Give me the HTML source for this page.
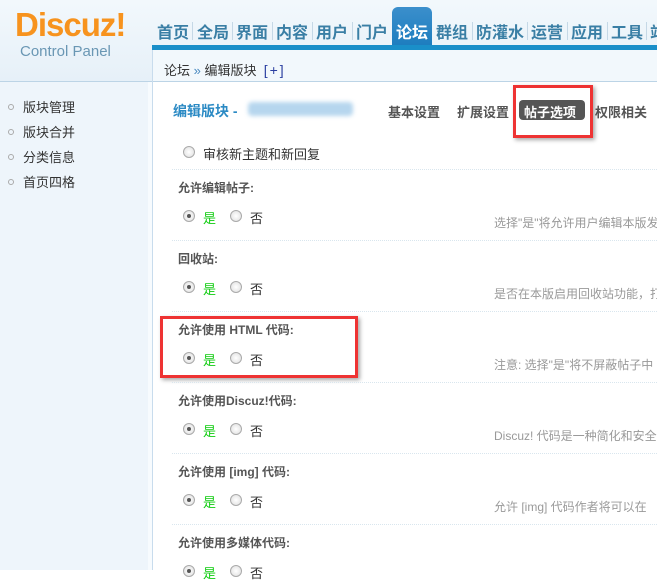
<!DOCTYPE html>
<html><head><meta charset="utf-8"><style>
*{margin:0;padding:0;box-sizing:border-box}
body{width:657px;height:570px;overflow:hidden;background:#fff;font-family:"Liberation Sans","Noto Sans CJK SC",sans-serif;font-size:12px;color:#333;position:relative}
.a{position:absolute;white-space:nowrap}
.hdr{left:0;top:0;width:657px;height:82px;background:linear-gradient(#f2f8fc,#e6f0f8)}
.side{left:0;top:82px;width:148px;height:488px;background:#eef5fb}
.nav{top:19px;font-size:16px;color:#3a7fa5;font-weight:bold;letter-spacing:0}
.sep{top:22px;width:1px;height:18px;background:#c5d8e6}
.cur{left:392px;top:7px;width:40px;height:43px;background:linear-gradient(#3b8fcc,#1a7bbd);border-radius:6px 6px 0 0}
.rad{width:12px;height:12px;border-radius:50%;border:1px solid #aaa;background:radial-gradient(#fff,#ddd)}
.on::after{content:"";position:absolute;left:3px;top:3px;width:4px;height:4px;border-radius:50%;background:#555}
.t{font-weight:bold;color:#555;font-size:12px}
.line{left:172px;height:1px;width:485px;background:linear-gradient(90deg,#d5e6f2 0,#d5e6f2 67%,transparent 67%);border-top:1px dotted #d9e6ee;height:0}
.d{color:#999;font-size:12px;left:494px}
.g{color:#1c1}
.box{border:3px solid #e33;box-shadow:2px 2px 4px rgba(0,0,0,.35)}
</style></head><body>
<div class="a hdr"></div>
<div class="a" style="left:15px;top:6px;font-size:33px;font-weight:bold;color:#f7931e;letter-spacing:-1px">Discuz!</div>
<div class="a" style="left:20px;top:43px;font-size:15px;color:#6a97b4">Control Panel</div>
<div class="a cur"></div>
<div class="a nav" style="left:157px">首页</div><div class="a sep" style="left:192px"></div>
<div class="a nav" style="left:197px">全局</div><div class="a sep" style="left:232px"></div>
<div class="a nav" style="left:236px">界面</div><div class="a sep" style="left:272px"></div>
<div class="a nav" style="left:276px">内容</div><div class="a sep" style="left:312px"></div>
<div class="a nav" style="left:316px">用户</div><div class="a sep" style="left:352px"></div>
<div class="a nav" style="left:356px">门户</div>
<div class="a nav" style="left:396px;color:#fff">论坛</div>
<div class="a nav" style="left:436px">群组</div><div class="a sep" style="left:472px"></div>
<div class="a nav" style="left:476px">防灌水</div><div class="a sep" style="left:527px"></div>
<div class="a nav" style="left:531px">运营</div><div class="a sep" style="left:567px"></div>
<div class="a nav" style="left:571px">应用</div><div class="a sep" style="left:607px"></div>
<div class="a nav" style="left:611px">工具</div><div class="a sep" style="left:646px"></div>
<div class="a nav" style="left:650px">站</div>
<div class="a" style="left:152px;top:45px;width:505px;height:5px;background:#1a8fc9"></div>
<div class="a" style="left:152px;top:50px;width:505px;height:32px;background:#f2f8fc"></div>
<div class="a" style="left:0;top:81px;width:657px;height:1px;background:#bcd4e6"></div>
<div class="a" style="left:152px;top:50px;width:1px;height:520px;background:#c8dced"></div>
<div class="a" style="left:164px;top:60px;font-size:13px;color:#333">论坛 <span style="color:#4a8ac0">»</span> 编辑版块 &nbsp;<span style="color:#2a3ea0;font-size:14px;letter-spacing:2px">[+]</span></div>
<div class="a side"></div>
<div class="a" style="left:148px;top:82px;width:4px;height:488px;background:#f7fbfe"></div>
<div class="a" style="left:8px;top:95px;line-height:25px;font-size:13px;color:#333">
<div><span style="display:inline-block;width:6px;height:6px;border:1px solid #aaa;border-radius:50%;margin-right:9px;vertical-align:2px"></span>版块管理</div>
<div><span style="display:inline-block;width:6px;height:6px;border:1px solid #aaa;border-radius:50%;margin-right:9px;vertical-align:2px"></span>版块合并</div>
<div><span style="display:inline-block;width:6px;height:6px;border:1px solid #aaa;border-radius:50%;margin-right:9px;vertical-align:2px"></span>分类信息</div>
<div><span style="display:inline-block;width:6px;height:6px;border:1px solid #aaa;border-radius:50%;margin-right:9px;vertical-align:2px"></span>首页四格</div>
</div>
<div class="a" style="left:173px;top:101px;font-size:14px;font-weight:bold;color:#2b8ac4">编辑版块 -</div>
<div class="a" style="left:248px;top:102px;width:105px;height:14px;background:#b6d6ee;filter:blur(2px);border-radius:4px"></div>
<div class="a t" style="left:388px;top:102px;font-size:13px">基本设置</div>
<div class="a t" style="left:457px;top:102px;font-size:13px">扩展设置</div>
<div class="a" style="left:519px;top:100px;width:66px;height:20px;background:#555;border-radius:4px"></div>
<div class="a t" style="left:524px;top:102px;font-size:13px;color:#fff">帖子选项</div>
<div class="a t" style="left:595px;top:102px;font-size:13px">权限相关</div>
<div class="a box" style="left:513px;top:85px;width:80px;height:53px"></div>

<div class="a rad" style="left:183px;top:146px"></div>
<div class="a" style="left:203px;top:144px;font-size:13px">审核新主题和新回复</div>

<div class="a line" style="top:169px"></div>
<div class="a t" style="left:178px;top:179px">允许编辑帖子:</div>
<div class="a rad on" style="left:183px;top:210px"></div><div class="a g" style="left:203px;top:208px;font-size:13px">是</div>
<div class="a rad" style="left:230px;top:210px"></div><div class="a" style="left:250px;top:208px;font-size:13px">否</div>
<div class="a d" style="top:214px">选择"是"将允许用户编辑本版发</div>

<div class="a line" style="top:240px"></div>
<div class="a t" style="left:178px;top:250px">回收站:</div>
<div class="a rad on" style="left:183px;top:281px"></div><div class="a g" style="left:203px;top:279px;font-size:13px">是</div>
<div class="a rad" style="left:230px;top:281px"></div><div class="a" style="left:250px;top:279px;font-size:13px">否</div>
<div class="a d" style="top:285px">是否在本版启用回收站功能，打</div>

<div class="a line" style="top:311px"></div>
<div class="a t" style="left:178px;top:321px">允许使用 HTML 代码:</div>
<div class="a rad on" style="left:183px;top:352px"></div><div class="a g" style="left:203px;top:350px;font-size:13px">是</div>
<div class="a rad" style="left:230px;top:352px"></div><div class="a" style="left:250px;top:350px;font-size:13px">否</div>
<div class="a d" style="top:356px">注意: 选择"是"将不屏蔽帖子中</div>
<div class="a box" style="left:160px;top:316px;width:198px;height:62px"></div>

<div class="a line" style="top:382px"></div>
<div class="a t" style="left:178px;top:392px">允许使用Discuz!代码:</div>
<div class="a rad on" style="left:183px;top:423px"></div><div class="a g" style="left:203px;top:421px;font-size:13px">是</div>
<div class="a rad" style="left:230px;top:423px"></div><div class="a" style="left:250px;top:421px;font-size:13px">否</div>
<div class="a d" style="top:427px">Discuz! 代码是一种简化和安全</div>

<div class="a line" style="top:453px"></div>
<div class="a t" style="left:178px;top:463px">允许使用 [img] 代码:</div>
<div class="a rad on" style="left:183px;top:494px"></div><div class="a g" style="left:203px;top:492px;font-size:13px">是</div>
<div class="a rad" style="left:230px;top:494px"></div><div class="a" style="left:250px;top:492px;font-size:13px">否</div>
<div class="a d" style="top:498px">允许 [img] 代码作者将可以在</div>

<div class="a line" style="top:524px"></div>
<div class="a t" style="left:178px;top:534px">允许使用多媒体代码:</div>
<div class="a rad on" style="left:183px;top:565px"></div><div class="a g" style="left:203px;top:563px;font-size:13px">是</div>
<div class="a rad" style="left:230px;top:565px"></div><div class="a" style="left:250px;top:563px;font-size:13px">否</div>
</body></html>
